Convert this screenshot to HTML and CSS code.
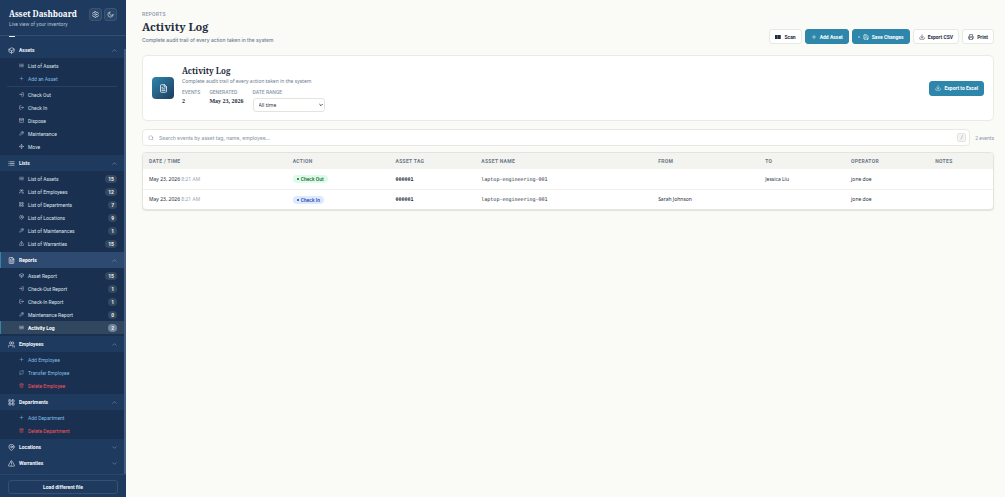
FILE: index.html
```html
<!DOCTYPE html>
<html lang="en">
<head>
  <meta charset="UTF-8">
  <meta name="viewport" content="width=device-width, initial-scale=1.0">
  <title>Asset Dashboard - Activity Log</title>
  <link rel="stylesheet" href="styles.css">
</head>
<body>
  <!-- Icon sprite -->
  <svg class="sprite" aria-hidden="true">
    <symbol id="i-box" viewBox="0 0 24 24"><path d="M21 8v8l-9 5-9-5V8l9-5z"/><path d="M3 8l9 5 9-5M12 13v8"/></symbol>
    <symbol id="i-list" viewBox="0 0 24 24"><path d="M8 6h13M8 12h13M8 18h13M3 6h1M3 12h1M3 18h1"/></symbol>
    <symbol id="i-file" viewBox="0 0 24 24"><path d="M14 2H6a2 2 0 0 0-2 2v16a2 2 0 0 0 2 2h12a2 2 0 0 0 2-2V8z"/><path d="M14 2v6h6M8 13h8M8 17h8M8 9h2"/></symbol>
    <symbol id="i-users" viewBox="0 0 24 24"><circle cx="9" cy="7" r="4"/><path d="M1 21v-2a4 4 0 0 1 4-4h8a4 4 0 0 1 4 4v2M16 3a4 4 0 0 1 0 8M23 21v-2a4 4 0 0 0-3-4"/></symbol>
    <symbol id="i-grid" viewBox="0 0 24 24"><rect x="3" y="3" width="7" height="7" rx="1"/><rect x="14" y="3" width="7" height="7" rx="1"/><rect x="3" y="14" width="7" height="7" rx="1"/><rect x="14" y="14" width="7" height="7" rx="1"/></symbol>
    <symbol id="i-pin" viewBox="0 0 24 24"><path d="M21 10c0 7-9 12-9 12s-9-5-9-12a9 9 0 0 1 18 0z"/><circle cx="12" cy="10" r="3"/></symbol>
    <symbol id="i-warn" viewBox="0 0 24 24"><path d="M10.3 3.9L1.8 18a2 2 0 0 0 1.7 3h17a2 2 0 0 0 1.7-3L13.7 3.9a2 2 0 0 0-3.4 0z"/><path d="M12 9v4M12 17v.5"/></symbol>
    <symbol id="i-plus" viewBox="0 0 24 24"><path d="M12 5v14M5 12h14"/></symbol>
    <symbol id="i-out" viewBox="0 0 24 24"><path d="M15 3h4a2 2 0 0 1 2 2v14a2 2 0 0 1-2 2h-4M3 12h11M10 7l5 5-5 5"/></symbol>
    <symbol id="i-in" viewBox="0 0 24 24"><path d="M9 21H5a2 2 0 0 1-2-2V5a2 2 0 0 1 2-2h4M9 12h12M17 8l4 4-4 4"/></symbol>
    <symbol id="i-archive" viewBox="0 0 24 24"><path d="M1 3h22v5H1zM3 8v13h18V8M10 12h4"/></symbol>
    <symbol id="i-wrench" viewBox="0 0 24 24"><path d="M14.7 6.3a1 1 0 0 0 0 1.4l1.6 1.6a1 1 0 0 0 1.4 0l3.8-3.8a6 6 0 0 1-7.9 7.9l-6.9 6.9a2.1 2.1 0 0 1-3-3l6.9-6.9a6 6 0 0 1 7.9-7.9z"/></symbol>
    <symbol id="i-move" viewBox="0 0 24 24"><path d="M12 2v20M2 12h20M9 5l3-3 3 3M9 19l3 3 3-3M5 9l-3 3 3 3M19 9l3 3-3 3"/></symbol>
    <symbol id="i-swap" viewBox="0 0 24 24"><path d="M17 1l4 4-4 4M3 11V9a4 4 0 0 1 4-4h14M7 23l-4-4 4-4M21 13v2a4 4 0 0 1-4 4H3"/></symbol>
    <symbol id="i-trash" viewBox="0 0 24 24"><path d="M3 6h18M5 6v14a2 2 0 0 0 2 2h10a2 2 0 0 0 2-2V6M8 6V2h8v4M10 11v6M14 11v6"/></symbol>
    <symbol id="i-up" viewBox="0 0 24 24"><path d="M4 16l8-8 8 8"/></symbol>
    <symbol id="i-down" viewBox="0 0 24 24"><path d="M4 8l8 8 8-8"/></symbol>
    <symbol id="i-gear" viewBox="0 0 24 24"><path d="M10 2h4l1 3 2 1 3-1 2 4-2 2v2l2 2-2 4-3-1-2 1-1 3h-4l-1-3-2-1-3 1-2-4 2-2v-2L2 9l2-4 3 1 2-1z"/><circle cx="12" cy="12" r="3"/></symbol>
    <symbol id="i-moon" viewBox="0 0 24 24"><path d="M21 13A9 9 0 1 1 11 3a7 7 0 0 0 10 10z"/></symbol>
    <symbol id="i-save" viewBox="0 0 24 24"><path d="M19 21H5a2 2 0 0 1-2-2V5a2 2 0 0 1 2-2h11l5 5v11a2 2 0 0 1-2 2z"/><path d="M17 21v-8H7v8M7 3v5h8"/></symbol>
    <symbol id="i-download" viewBox="0 0 24 24"><path d="M21 15v4a2 2 0 0 1-2 2H5a2 2 0 0 1-2-2v-4M7 10l5 5 5-5M12 15V3"/></symbol>
    <symbol id="i-print" viewBox="0 0 24 24"><path d="M6 9V2h12v7M6 18H4a2 2 0 0 1-2-2v-5a2 2 0 0 1 2-2h16a2 2 0 0 1 2 2v5a2 2 0 0 1-2 2h-2M6 14h12v8H6z"/></symbol>
    <symbol id="i-search" viewBox="0 0 24 24"><circle cx="11" cy="11" r="8"/><path d="M21 21l-4-4"/></symbol>
  </svg>

  <div class="app">
    <aside class="sidebar">
      <header class="brand">
        <div>
          <div class="brand-name">Asset Dashboard</div>
          <div class="brand-sub">Live view of your inventory</div>
        </div>
        <div class="brand-actions">
          <button class="icon-btn" aria-label="Settings"><svg><use href="#i-gear"/></svg></button>
          <button class="icon-btn" aria-label="Dark mode"><svg><use href="#i-moon"/></svg></button>
        </div>
      </header>

      <nav class="nav">
        <div class="nav-peek"></div>

        <button class="group"><svg><use href="#i-box"/></svg>Assets<svg class="chev"><use href="#i-up"/></svg></button>
        <div class="sub">
          <a href="#"><svg><use href="#i-list"/></svg>List of Assets</a>
          <a href="#" class="add"><svg><use href="#i-plus"/></svg>Add an Asset</a>
          <hr>
          <a href="#"><svg><use href="#i-out"/></svg>Check Out</a>
          <a href="#"><svg><use href="#i-in"/></svg>Check In</a>
          <a href="#"><svg><use href="#i-archive"/></svg>Dispose</a>
          <a href="#"><svg><use href="#i-wrench"/></svg>Maintenance</a>
          <a href="#"><svg><use href="#i-move"/></svg>Move</a>
        </div>

        <button class="group"><svg><use href="#i-list"/></svg>Lists<svg class="chev"><use href="#i-up"/></svg></button>
        <div class="sub">
          <a href="#"><svg><use href="#i-list"/></svg>List of Assets<span class="count">15</span></a>
          <a href="#"><svg><use href="#i-users"/></svg>List of Employees<span class="count">12</span></a>
          <a href="#"><svg><use href="#i-grid"/></svg>List of Departments<span class="count">7</span></a>
          <a href="#"><svg><use href="#i-pin"/></svg>List of Locations<span class="count">9</span></a>
          <a href="#"><svg><use href="#i-wrench"/></svg>List of Maintenances<span class="count">1</span></a>
          <a href="#"><svg><use href="#i-warn"/></svg>List of Warranties<span class="count">15</span></a>
        </div>

        <button class="group current"><svg><use href="#i-file"/></svg>Reports<svg class="chev"><use href="#i-up"/></svg></button>
        <div class="sub">
          <a href="#"><svg><use href="#i-box"/></svg>Asset Report<span class="count">15</span></a>
          <a href="#"><svg><use href="#i-out"/></svg>Check-Out Report<span class="count">1</span></a>
          <a href="#"><svg><use href="#i-in"/></svg>Check-In Report<span class="count">1</span></a>
          <a href="#"><svg><use href="#i-wrench"/></svg>Maintenance Report<span class="count">0</span></a>
          <a href="#" class="active"><svg><use href="#i-list"/></svg>Activity Log<span class="count">2</span></a>
        </div>

        <button class="group"><svg><use href="#i-users"/></svg>Employees<svg class="chev"><use href="#i-up"/></svg></button>
        <div class="sub">
          <a href="#" class="add"><svg><use href="#i-plus"/></svg>Add Employee</a>
          <a href="#" class="add"><svg><use href="#i-swap"/></svg>Transfer Employee</a>
          <a href="#" class="danger"><svg><use href="#i-trash"/></svg>Delete Employee</a>
        </div>

        <button class="group"><svg><use href="#i-grid"/></svg>Departments<svg class="chev"><use href="#i-up"/></svg></button>
        <div class="sub">
          <a href="#" class="add"><svg><use href="#i-plus"/></svg>Add Department</a>
          <a href="#" class="danger"><svg><use href="#i-trash"/></svg>Delete Department</a>
        </div>

        <button class="group"><svg><use href="#i-pin"/></svg>Locations<svg class="chev"><use href="#i-down"/></svg></button>
        <button class="group"><svg><use href="#i-warn"/></svg>Warranties<svg class="chev"><use href="#i-down"/></svg></button>
        <div class="scroll-thumb"></div>
      </nav>

      <footer class="side-foot">
        <button class="load-btn">Load different file</button>
      </footer>
    </aside>

    <main class="main">
      <header class="page-head">
        <div>
          <div class="eyebrow">REPORTS</div>
          <h1>Activity Log</h1>
          <p class="desc">Complete audit trail of every action taken in the system</p>
        </div>
        <div class="actions">
          <button class="btn"><span class="barcode"></span>Scan</button>
          <button class="btn primary"><svg><use href="#i-plus"/></svg>Add Asset</button>
          <button class="btn primary"><span class="dot"></span><svg><use href="#i-save"/></svg>Save Changes</button>
          <button class="btn"><svg><use href="#i-download"/></svg>Export CSV</button>
          <button class="btn"><svg><use href="#i-print"/></svg>Print</button>
        </div>
      </header>

      <section class="card">
        <div class="card-icon"><svg><use href="#i-file"/></svg></div>
        <div class="card-body">
          <h2>Activity Log</h2>
          <p class="card-desc">Complete audit trail of every action taken in the system</p>
          <div class="meta">
            <div><div class="meta-label">EVENTS</div><div class="meta-value">2</div></div>
            <div><div class="meta-label">GENERATED</div><div class="meta-value">May 23, 2026</div></div>
            <div>
              <label class="meta-label" for="range">DATE RANGE</label>
              <div class="select-wrap">
                <select id="range"><option>All time</option></select>
                <svg><use href="#i-down"/></svg>
              </div>
            </div>
          </div>
        </div>
        <button class="btn primary"><svg><use href="#i-download"/></svg>Export to Excel</button>
      </section>

      <div class="search-row">
        <div class="search">
          <svg><use href="#i-search"/></svg>
          <input type="text" aria-label="Search events" placeholder="Search events by asset tag, name, employee...">
          <kbd>/</kbd>
        </div>
        <span class="total">2 events</span>
      </div>

      <div class="table-wrap">
        <table>
          <colgroup>
            <col class="c-date"><col class="c-action"><col class="c-tag"><col class="c-name"><col class="c-from"><col class="c-to"><col class="c-op"><col>
          </colgroup>
          <thead>
            <tr><th>DATE / TIME</th><th>ACTION</th><th>ASSET TAG</th><th>ASSET NAME</th><th>FROM</th><th>TO</th><th>OPERATOR</th><th>NOTES</th></tr>
          </thead>
          <tbody>
            <tr>
              <td>May 23, 2026 <span class="time">8:21 AM</span></td>
              <td><span class="pill out">Check Out</span></td>
              <td class="mono strong">000001</td>
              <td class="mono">laptop-engineering-001</td>
              <td></td><td>Jessica Liu</td><td>jone doe</td><td></td>
            </tr>
            <tr>
              <td>May 23, 2026 <span class="time">8:21 AM</span></td>
              <td><span class="pill in">Check In</span></td>
              <td class="mono strong">000001</td>
              <td class="mono">laptop-engineering-001</td>
              <td>Sarah Johnson</td><td></td><td>jone doe</td><td></td>
            </tr>
          </tbody>
        </table>
      </div>
    </main>
  </div>
</body>
</html>
```
FILE: styles.css
```css
* {
  box-sizing: border-box;
}

body {
  margin: 0;
  font-family: "Noto Sans", sans-serif;
  font-size: 5px;
  line-height: 8px;
  color: #1f2d3d;
  background: #fafaf6;
}

button, input, select {
  font: inherit;
  color: inherit;
}

button {
  cursor: pointer;
}

h1, h2, p {
  margin: 0;
}

svg {
  width: 6px;
  height: 6px;
  flex: none;
  fill: none;
  stroke: currentColor;
  stroke-width: 2;
  stroke-linecap: round;
  stroke-linejoin: round;
}

.sprite {
  position: absolute;
  width: 0;
  height: 0;
}

.app {
  display: flex;
  height: 100vh;
}

/* Sidebar */
.sidebar {
  display: flex;
  flex-direction: column;
  flex: none;
  width: 126px;
  background: #1e3a5f;
  color: #f1f5f9;
  font-family: Roboto, sans-serif;
}

.brand {
  display: flex;
  justify-content: space-between;
  height: 36px;
  padding: 8px 9px 0;
  border-bottom: 1px solid #33506f;
}

.brand-name {
  font: bold 8px/12px "Noto Serif", "Liberation Serif", serif;
  color: #fff;
  white-space: nowrap;
}

.brand-sub {
  color: #b4c3d5;
}

.brand-actions {
  display: flex;
  gap: 2px;
}

.icon-btn {
  display: flex;
  align-items: center;
  justify-content: center;
  width: 13px;
  height: 13px;
  padding: 0;
  border: 1px solid #3a5475;
  border-radius: 3px;
  background: #2a4669;
}

.icon-btn svg {
  width: 7px;
  height: 7px;
}

.nav {
  position: relative;
  flex: 1;
  min-height: 0;
  padding-right: 2px;
  overflow: hidden;
}

.nav-peek {
  width: 6px;
  height: 1px;
  margin: 0 9px 5px;
  background: #e8eef5;
}

.scroll-thumb {
  position: absolute;
  top: 13px;
  right: 0;
  bottom: 0;
  width: 2px;
  background: #436080;
}

.group {
  display: flex;
  align-items: center;
  gap: 4px;
  width: 100%;
  height: 16px;
  padding: 0 7px;
  border: 0;
  border-left: 1px solid transparent;
  background: none;
  font-weight: 700;
}

.group svg {
  width: 7px;
  height: 7px;
}

.group .chev {
  width: 5px;
  height: 5px;
  margin-left: auto;
  color: #a3b5c9;
}

.group.current {
  border-left-color: #2e86ab;
  background: #2f4a70;
  color: #fff;
}

.sub {
  padding: 1px 0 2px;
  background: #1a3050;
}

.sub a {
  display: flex;
  align-items: center;
  gap: 4px;
  height: 13px;
  padding: 0 7px 0 18px;
  border-left: 1px solid transparent;
  color: #dbe3ec;
  text-decoration: none;
}

.sub svg {
  width: 5px;
  height: 5px;
}

.sub hr {
  height: 1px;
  margin: 1px 7px;
  border: 0;
  background: #294160;
}

.sub .add {
  color: #7fbde5;
}

.sub .danger {
  color: #f0545f;
}

.sub .active {
  border-left-color: #2e86ab;
  background: #31475f;
  color: #fff;
  font-weight: 700;
}

.count {
  min-width: 8px;
  margin-left: auto;
  padding: 0 3px;
  border-radius: 4px;
  background: #34495f;
  color: #e8eef5;
  font-weight: 700;
  text-align: center;
}

.active .count {
  background: #70859b;
}

.side-foot {
  padding: 5px 8px 3px;
  border-top: 1px solid #2b4768;
}

.load-btn {
  width: 100%;
  height: 14px;
  padding: 0;
  border: 1px solid #36516f;
  border-radius: 3px;
  background: none;
  font-weight: 700;
}

/* Main */
.main {
  flex: 1;
  min-width: 0;
  padding: 10px 11px 0 16px;
}

.page-head {
  display: flex;
  align-items: flex-end;
  justify-content: space-between;
  margin-bottom: 11px;
}

.eyebrow, .meta-label {
  display: block;
  color: #8a97a8;
  font-family: Roboto, sans-serif;
  font-weight: 500;
}

.eyebrow {
  letter-spacing: 0.06em;
}

h1 {
  font: bold 11px/18px "Noto Serif", "Liberation Serif", serif;
}

h2 {
  font: bold 8px/13px "Noto Serif", "Liberation Serif", serif;
}

.desc, .card-desc {
  color: #6b7a90;
}

.desc {
  font-family: Inter, sans-serif;
  font-weight: 500;
}

.actions {
  display: flex;
  gap: 3px;
}

.btn {
  display: flex;
  align-items: center;
  gap: 3px;
  height: 15px;
  padding: 0 5px;
  border: 1px solid #e9e9e4;
  border-radius: 3px;
  background: #fff;
  font-family: Roboto, sans-serif;
  font-weight: 700;
  white-space: nowrap;
}

.btn.primary {
  border-color: #2e86ab;
  background: #2e86ab;
  color: #fff;
}

.barcode {
  width: 6px;
  height: 4px;
  background: repeating-linear-gradient(90deg, #1f2d3d 0 2px, #56616d 2px 3px);
}

.dot {
  width: 2px;
  height: 2px;
  border-radius: 50%;
  background: #8fc0d5;
}

.card {
  display: flex;
  align-items: center;
  gap: 8px;
  margin-bottom: 8px;
  padding: 8px 9px;
  border: 1px solid #ebebe6;
  border-radius: 5px;
  background: #fff;
}

.card-icon {
  display: flex;
  align-items: center;
  justify-content: center;
  width: 22px;
  height: 22px;
  border-radius: 4px;
  background: linear-gradient(135deg, #2e86ab, #1e3a5f);
  color: #fff;
}

.card-icon svg {
  width: 9px;
  height: 9px;
}

.card-body {
  flex: 1;
}

.meta {
  display: flex;
  gap: 9px;
  margin-top: 3px;
}

.meta-value {
  font: bold 6px/10px "Liberation Serif", serif;
}

.select-wrap {
  position: relative;
  width: 72px;
  margin-top: 2px;
}

.select-wrap select {
  display: block;
  width: 100%;
  height: 14px;
  padding: 0 5px;
  border: 1px solid #e4e4df;
  border-radius: 3px;
  background: #fff;
  appearance: none;
}

.select-wrap svg {
  position: absolute;
  top: 5px;
  right: 2px;
  width: 4px;
  height: 4px;
  stroke-width: 5;
  pointer-events: none;
}

.search-row {
  display: flex;
  align-items: center;
  gap: 5px;
  margin-bottom: 6px;
}

.search {
  display: flex;
  align-items: center;
  flex: 1;
  gap: 5px;
  height: 17px;
  padding: 0 3px 0 5px;
  border: 1px solid #e9e9e4;
  border-radius: 4px;
  background: #fff;
  color: #8a97a8;
}

.search input {
  flex: 1;
  min-width: 0;
  padding: 0;
  border: 0;
  outline: 0;
  background: none;
  font-family: Inter, sans-serif;
  font-weight: 500;
}

.search input::placeholder {
  color: #8f9bab;
}

kbd {
  width: 9px;
  border: 1px solid #e4e4df;
  border-radius: 2px;
  background: #f4f5f1;
  font: 5px/7px "DejaVu Sans Mono", monospace;
  text-align: center;
}

.total {
  color: #8a97a8;
  font-family: Roboto, sans-serif;
}

.table-wrap {
  border: 1px solid #e4e4df;
  border-radius: 4px;
  background: #fff;
  box-shadow: 0 1px 1px #e4e4df;
  overflow: hidden;
}

table {
  width: 100%;
  table-layout: fixed;
  border-collapse: collapse;
}

.c-date { width: 16.9%; }
.c-action { width: 12.1%; }
.c-tag { width: 10.1%; }
.c-name { width: 20.8%; }
.c-from { width: 12.6%; }
.c-to { width: 10.1%; }
.c-op { width: 9.9%; }

th, td {
  padding: 0 6px;
  text-align: left;
  white-space: nowrap;
}

th {
  height: 16px;
  background: #f3f4ef;
  color: #6b7888;
  font-family: Roboto, sans-serif;
  font-weight: 700;
  letter-spacing: 0.06em;
}

td {
  height: 20px;
}

tbody tr + tr td {
  border-top: 1px solid #efefeb;
}

.time {
  color: #98a4b3;
}

.mono {
  font-family: "DejaVu Sans Mono", monospace;
}

.strong {
  font-weight: bold;
}

.pill {
  display: inline-flex;
  align-items: center;
  gap: 2px;
  padding: 0 4px;
  border-radius: 4px;
  font-family: Roboto, sans-serif;
  font-weight: 500;
  vertical-align: middle;
}

.pill::before {
  content: "";
  width: 2px;
  height: 2px;
  border-radius: 50%;
  background: currentColor;
}

.pill.out {
  background: #dcfce7;
  color: #166534;
}

.pill.in {
  background: #dbeafe;
  color: #1e40af;
}
```
